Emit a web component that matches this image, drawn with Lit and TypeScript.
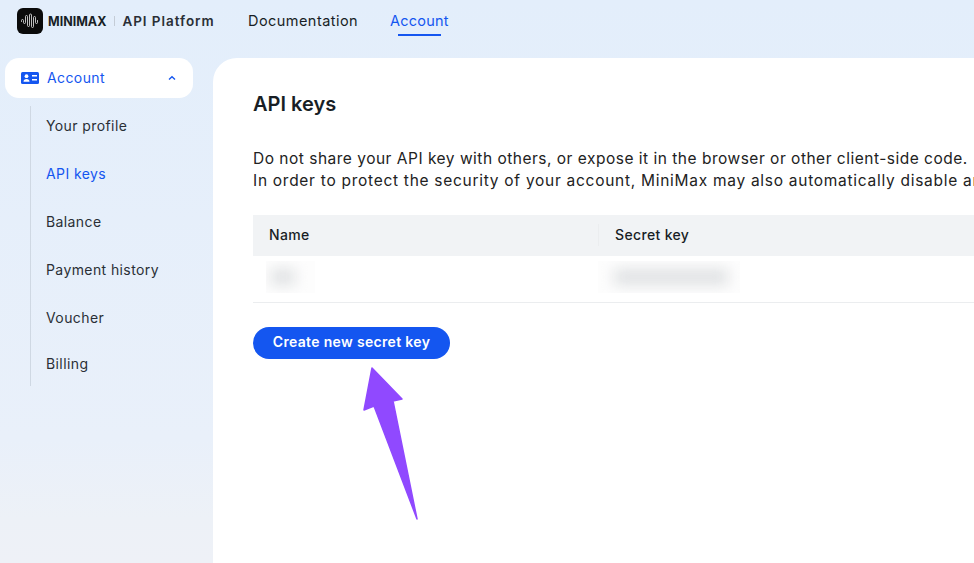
import { LitElement, html, css } from "lit";
import { customElement } from "lit/decorators.js";

@customElement("app-root")
export class AppRoot extends LitElement {
  static styles = css`
    :host { display: block; width: 974px; height: 563px; overflow: hidden; position: relative; background: linear-gradient(180deg, #e3eefb 0%, #e9f0fa 78%, #edf1f7 92%, #eef1f7 100%); font-family: Inter, "Open Sans", sans-serif; color: #181e25; }
    .top { height: 58px; display: flex; align-items: flex-start; padding-left: 17px; }
    .logo { display: flex; align-items: center; height: 26px; margin-top: 8px; width: 231px; flex: none; }
    .mark { width: 26px; height: 26px; flex: none; }
    .brand { font-size: 12.5px; font-weight: 700; margin-left: 5px; letter-spacing: 0; }
    .sep { width: 1px; height: 10px; background: #c4ccd6; margin: 0 8px; }
    .plat { font-size: 13.5px; font-weight: 600; letter-spacing: 0.95px; color: #2a2f36; margin-left: -1px; }
    .tab { font-size: 14.5px; margin-right: 32px; height: 36px; display: flex; flex-direction: column; align-items: center; padding-top: 12px; box-sizing: border-box; line-height: 18px; letter-spacing: 0.45px; }
    .tab.on { color: #1456f0; letter-spacing: 0.2px; }
    .tab i { display: block; width: 43px; height: 2px; background: #1456f0; margin-top: 4px; }
    .body { display: flex; height: 505px; }
    .side { width: 213px; flex: none; padding: 0 20px 0 5px; box-sizing: border-box; }
    .acct { height: 40px; width: 188px; background: #fff; border-radius: 14px; display: flex; align-items: center; padding: 0 16px; box-sizing: border-box; color: #1456f0; font-size: 14px; letter-spacing: 0.4px; }
    .acct svg.card { width: 18px; height: 12px; margin-right: 8px; }
    .acct span { flex: 1; line-height: 18px; }
    .chev { width: 8px; height: 6px; margin-right: 1px; }
    .items { margin-left: 25px; border-left: 1px solid #cfd8e3; height: 280px; margin-top: 8px; padding-left: 15px; display: flex; flex-direction: column; gap: 8px; }
    .item { height: 40px; display: flex; align-items: center; font-size: 14px; letter-spacing: 0.4px; color: #2a2f36; flex: none; padding-bottom: 2px; box-sizing: border-box; }
    .item.on { color: #1456f0; }
    .item.last { margin-top: -2px; }
    .main { flex: 1; background: #fff; border-top-left-radius: 24px; padding: 33px 0 0 40px; min-width: 0; overflow: hidden; }
    h1 { margin: 0; font-size: 20px; font-weight: 600; line-height: 26px; }
    .note { margin-top: 31px; font-size: 15.5px; letter-spacing: 0.5px; line-height: 22px; white-space: nowrap; color: #222; }
    .note .l2 { letter-spacing: 0.72px; }
    .table { margin-top: 23px; }
    .head { height: 41px; background: #f1f3f5; display: flex; align-items: center; font-size: 14px; font-weight: 500; letter-spacing: 0.35px; box-sizing: border-box; padding-bottom: 1px; }
    .c1 { width: 345px; padding-left: 16px; box-sizing: border-box; flex: none; height: 22px; line-height: 22px; }
    .c2 { border-left: 1px solid #ebedef; padding-left: 16px; height: 22px; line-height: 22px; }
    .row { height: 47px; border-bottom: 1px solid #ebedef; display: flex; align-items: flex-start; padding-top: 5px; box-sizing: border-box; }
    .blur { height: 32px; flex: none; overflow: hidden; position: relative; background: #fdfdfd; }
    .blur::before { content: ""; position: absolute; background: #dfe1e3; filter: blur(7px); top: 8px; bottom: 8px; }
    .blur1 { width: 49px; margin-left: 13px; }
    .blur1::before { left: 5px; width: 24px; }
    .blur2 { width: 142px; margin-left: 283px; }
    .blur2::before { left: 16px; right: 12px; }
    button { display: block; margin-top: 24px; width: 197px; height: 32px; border: 0; border-radius: 16px; background: #1456f0; color: #fff; font: 600 14px Inter, sans-serif; letter-spacing: 0.33px; padding: 0 0 3px; }
    .arrow { position: absolute; left: 360px; top: 364px; width: 62px; height: 160px; }
  `;
  render() {
    return html`
      <div class="top">
        <div class="logo">
          <svg class="mark" viewBox="0 0 26 26">
            <rect width="26" height="26" rx="6" fill="#0b0b0b"/>
            <path d="M4.500 13.500v-1a1 1 0 0 1 2 0v2a1 1 0 0 0 2 0V8.500a1 1 0 0 1 2 0v9a1 1 0 0 0 2 0V7a1 1 0 0 1 2 0v11.500a1 1 0 0 0 2 0V9.500a1 1 0 0 1 2 0v5a1 1 0 0 0 2 0v-2" fill="none" stroke="#d4d4d4" stroke-width="0.900" stroke-linecap="round"/>
          </svg>
          <span class="brand">MINIMAX</span><span class="sep"></span><span class="plat">API Platform</span>
        </div>
        <div class="tab">Documentation</div>
        <div class="tab on">Account<i></i></div>
      </div>
      <div class="body">
        <nav class="side">
          <div class="acct">
            <svg class="card" viewBox="0 0 18 12"><rect width="18" height="12" rx="1.500" fill="#1456f0"/><circle cx="5.500" cy="4.200" r="1.900" fill="#fff"/><path d="M2.500 9.800c0-1.800 1.300-2.800 3-2.800s3 1 3 2.800z" fill="#fff"/><rect x="11" y="3" width="5" height="1.500" fill="#fff"/><rect x="11" y="7" width="5" height="1.500" fill="#fff"/></svg>
            <span>Account</span>
            <svg class="chev" viewBox="0 0 8 6"><path d="M1 4.500 4 1.800l3 2.700" fill="none" stroke="#1456f0" stroke-width="1.400"/></svg>
          </div>
          <div class="items">
            <div class="item">Your profile</div>
            <div class="item on">API keys</div>
            <div class="item">Balance</div>
            <div class="item">Payment history</div>
            <div class="item">Voucher</div>
            <div class="item last">Billing</div>
          </div>
        </nav>
        <main class="main">
          <h1>API keys</h1>
          <div class="note">Do not share your API key with others, or expose it in the browser or other client-side code.<br><span class="l2">In order to protect the security of your account, MiniMax may also automatically disable any API key that has leaked.</span></div>
          <div class="table">
            <div class="head"><div class="c1">Name</div><div class="c2">Secret key</div></div>
            <div class="row"><div class="blur blur1"></div><div class="blur blur2"></div></div>
          </div>
          <button>Create new secret key</button>
        </main>
      </div>
      <svg class="arrow" viewBox="360 364 62 160"><path d="M372 368 402 399 393 401 417 519 374 406 364 410Z" fill="#9049ff" stroke="#9049ff" stroke-width="1.500" stroke-linejoin="round"/></svg>
    `;
  }
}
